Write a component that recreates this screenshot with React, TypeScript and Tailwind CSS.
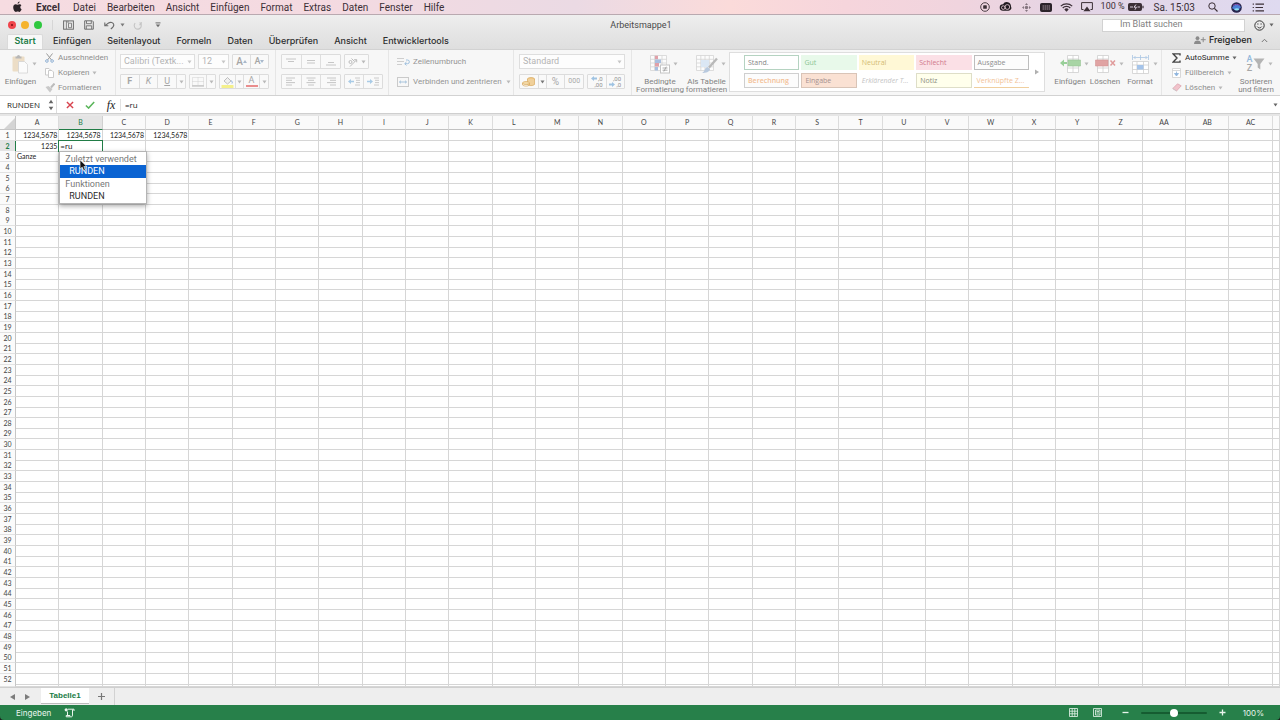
import type { CSSProperties, ReactNode } from "react";

type IconProps = { w: number; h: number; children: ReactNode; className?: string };

function Icon({ w, h, children, className = "" }: IconProps) {
  return (
    <svg
      width={w}
      height={h}
      viewBox={`0 0 ${w} ${h}`}
      fill="none"
      stroke="currentColor"
      aria-hidden="true"
      className={`shrink-0 ${className}`}
    >
      {children}
    </svg>
  );
}

function Caret({ className = "text-[#b9b9b9]" }: { className?: string }) {
  return (
    <Icon w={5} h={4} className={className}>
      <path d="M0.5 0.5h4L2.5 3.5z" fill="currentColor" stroke="none" />
    </Icon>
  );
}

/* ---------- system menu bar ---------- */

const MENUS = ["Datei", "Bearbeiten", "Ansicht", "Einfügen", "Format", "Extras", "Daten", "Fenster", "Hilfe"];

function MenuBar() {
  return (
    <header className="flex h-[15px] shrink-0 items-center justify-between border-b border-[#b9a9b0] bg-[linear-gradient(90deg,#f6dce1_0%,#f4dae1_25%,#ebdae4_45%,#fbdbda_57%,#f6d5dc_66%,#f0d4de_75%,#e3d5e6_85%,#dfdaf0_100%)] pr-[15px] pl-3 text-[10px] text-[#3b2f36]">
      <nav className="flex items-center gap-[11px]" aria-label="Menüleiste">
        <button aria-label="Apple" className="mr-[2px]">
          <Icon w={11} h={12} className="text-[#2a2227]">
            <path
              d="M7.6 0.5c.1 1-.9 2.2-2 2.2C5.500 1.600 6.500 .6 7.600 .5zM9.600 8.200c-.5 1.300-1.300 2.700-2.300 2.700-.7 0-.9-.4-1.700-.4s-1.100.4-1.700.4C2.500 10.900 1.200 8.700 1.200 6.500c0-2 1.200-3.200 2.500-3.200.8 0 1.400.5 1.900.5s1.200-.6 2.200-.5c.6 0 1.200.3 1.600.9-1.600 1-1.400 3.300.2 4z"
              fill="currentColor"
              stroke="none"
            />
          </Icon>
        </button>
        <button className="mr-[2px] font-bold">Excel</button>
        {MENUS.map((m) => (
          <button key={m}>{m}</button>
        ))}
      </nav>
      <div className="flex items-center">
        <Icon w={10} h={10}>
          <circle cx="5" cy="5" r="4.300" strokeWidth=".9" />
          <rect x="3.200" y="3.200" width="3.600" height="3.600" rx=".6" fill="currentColor" stroke="none" />
        </Icon>
        <Icon w={13} h={10} className="ml-[9px] text-[#221b20]">
          <path d="M4 8.800a3.300 3.300 0 010-6.600A4.300 4.300 0 0112 4.500 2.900 2.900 0 019.500 8.800z" fill="currentColor" stroke="none" />
          <circle cx="4.300" cy="5.600" r="1.800" stroke="#f0d4de" strokeWidth=".8" />
          <circle cx="8.300" cy="5" r="2.400" stroke="#f0d4de" strokeWidth=".8" />
        </Icon>
        <Icon w={9} h={9} className="ml-[10px] text-[#85757f]">
          <path d="M4.500 0L6 2H3zM4.500 9L3 7h3zM0 4.500L2 3v3zM9 4.500L7 6V3z" fill="currentColor" stroke="none" />
          <circle cx="4.500" cy="4.500" r="1.700" fill="currentColor" stroke="none" />
        </Icon>
        <Icon w={12} h={9} className="ml-[9px] text-[#2b232a]">
          <rect x=".5" y=".5" width="11" height="8" rx="1" fill="currentColor" />
          <path d="M3.200 2v5M5.200 2v5M7.200 2v5M9.200 2v5" stroke="#b9a9b4" strokeWidth=".6" />
        </Icon>
        <Icon w={13} h={9} className="ml-[8px]">
          <path d="M.8 3.100a8.200 8.200 0 0111.400 0M2.700 5a5.400 5.400 0 017.600 0" strokeWidth="1.200" />
          <path d="M4.300 6.400a3.200 3.200 0 014.400 0L6.500 8.700z" fill="currentColor" stroke="none" />
        </Icon>
        <Icon w={12} h={10} className="ml-[8px]">
          <path d="M2.500 7.500H.6V.6h10.800v6.900H9.500" />
          <path d="M6 4.500l3.600 4.700H2.400z" fill="currentColor" stroke="none" />
        </Icon>
        <span className="ml-[8px] text-[9px] whitespace-nowrap">100 %</span>
        <Icon w={16} h={8} className="ml-[3px]">
          <rect x=".5" y=".5" width="13" height="7" rx="1" fill="currentColor" />
          <path d="M15 2.700v2.600" strokeWidth="1.200" />
          <path d="M2 4h3M8 1.500L6 4.200h2.400L7 6.700M9.500 4h2.500" stroke="#e8dcec" strokeWidth=".9" />
        </Icon>
        <time className="ml-[10px] whitespace-nowrap">Sa. 15:03</time>
        <Icon w={10} h={10} className="ml-[13px]">
          <circle cx="4" cy="4" r="3.200" />
          <path d="M6.400 6.400L9.500 9.500" strokeWidth="1.200" />
        </Icon>
        <Icon w={11} h={11} className="ml-[13px]">
          <circle cx="5.500" cy="5.500" r="5.300" fill="#26244d" stroke="none" />
          <path d="M1 6c2-4 6-4 9-1-2 3-6 4-9 1z" fill="#4b7fd6" stroke="none" />
          <path d="M3 7c2-1 4-1 5.500 0C7 9 4.500 9 3 7z" fill="#8fe0f2" stroke="none" />
          <path d="M2 3.500c2-1.500 5-1.500 7 0" stroke="#a05ac8" strokeWidth=".8" />
        </Icon>
        <Icon w={13} h={9} className="ml-[10px]">
          <path d="M3.500 1.200h8.500M3.500 4.500h7.500M3.500 7.800h8.500M.7 1.200h1.200M.7 4.500h1.200M.7 7.800h1.200" strokeWidth="1.200" />
        </Icon>
      </div>
    </header>
  );
}

/* ---------- window title bar ---------- */

function TitleBar() {
  return (
    <div className="grid h-[19px] shrink-0 grid-cols-[1fr_auto_1fr] items-center pt-px pr-[6px] pl-2 text-[9px] text-[#4a4a4a]">
      <div className="flex items-center">
        <div className="flex gap-[5px]">
          <button aria-label="Schließen" className="flex size-2 items-center justify-center rounded-full bg-[#f0454c]">
            <span className="size-[2px] rounded-full bg-[#7d0d10]" />
          </button>
          <button aria-label="Minimieren" className="size-2 rounded-full bg-[#f5b32e]" />
          <button aria-label="Vollbild" className="size-2 rounded-full bg-[#2fc83f]" />
        </div>
        <span className="ml-[10px] h-[10px] w-px bg-[#d6d6d6]" />
        <button aria-label="Seitenleiste" className="ml-[10px]">
          <Icon w={11} h={10} className="text-[#6d6d6d]">
            <rect x=".6" y=".9" width="9.800" height="8.300" />
            <path d="M3.400 1v8M5 3V1M5.500 3.200h3v4.500h-3z" strokeWidth=".8" />
          </Icon>
        </button>
        <button aria-label="Sichern" className="ml-[10px]">
          <Icon w={10} h={10} className="text-[#6d6d6d]">
            <path d="M.7.8h7.600l1 1v7.400H.7z" />
            <path d="M2.500 1v2.700h4.800V1M2.300 9V5.800h5.400V9" strokeWidth=".9" />
          </Icon>
        </button>
        <button aria-label="Widerrufen" className="ml-[10px] flex items-center gap-[5px]">
          <Icon w={11} h={9} className="text-[#6d6d6d]">
            <path d="M.8 1.500v3.300h3.500M1 4.600L4.500 2c2-1.300 5-.6 5.300 1.700.2 1.500-1 2.800-3 4.300" strokeWidth="1.100" />
          </Icon>
          <Caret className="text-[#7a7a7a]" />
        </button>
        <button aria-label="Wiederholen" className="ml-2">
          <Icon w={9} h={9} className="text-[#c4c4c4]">
            <path d="M6.500 1.600A3.500 3.500 0 112.200 2.200M6.200 3.700h2V1" strokeWidth="1.100" />
          </Icon>
        </button>
        <button aria-label="Symbolleiste anpassen" className="ml-[13px]">
          <Icon w={6} h={6} className="text-[#6d6d6d]">
            <path d="M.5.9h5" />
            <path d="M.8 2.500h4.400L3 5.200z" fill="currentColor" stroke="none" />
          </Icon>
        </button>
      </div>
      <h1 className="pt-px whitespace-nowrap">Arbeitsmappe1</h1>
      <div className="flex items-center justify-end">
        <input
          type="search"
          aria-label="Im Blatt suchen"
          placeholder="Im Blatt suchen"
          className="h-[13px] w-[143px] border border-[#d2d2d2] bg-white pl-[17px] text-[9px] outline-none placeholder:text-[#808080]"
        />
        <button aria-label="Feedback" className="ml-[9px] flex items-center gap-[4px]">
          <Icon w={11} h={11} className="text-[#333]">
            <circle cx="5.500" cy="5.500" r="4.700" />
            <path d="M3.200 6.500c1 1.900 3.600 1.900 4.600 0" strokeWidth=".9" />
            <path d="M3.900 3.400v1.200M7.100 3.400v1.200" />
          </Icon>
          <Caret className="text-[#666]" />
        </button>
      </div>
    </div>
  );
}

const TABS = ["Einfügen", "Seitenlayout", "Formeln", "Daten", "Überprüfen", "Ansicht", "Entwicklertools"];

function TabBar() {
  return (
    <div className="flex h-[15px] shrink-0 items-stretch justify-between pr-3 pl-[7px] font-['Inter','Liberation_Sans',sans-serif] text-[9px] leading-[12px] font-medium text-[#2e2e2e]">
      <div className="flex items-stretch" role="tablist">
        <button
          role="tab"
          aria-selected="true"
          className="w-9 rounded-t-[2px] border border-b-0 border-[#dadada] bg-[#f8f8f8] pb-[2px] font-semibold text-[#217c46]"
        >
          Start
        </button>
        <div className="flex gap-4 pb-px pl-[10px]">
          {TABS.map((t) => (
            <button role="tab" aria-selected="false" key={t}>
              {t}
            </button>
          ))}
        </div>
      </div>
      <div className="flex items-center pb-[3px]">
        <button className="flex items-center gap-[3px] text-[#1e1e1e]">
          <Icon w={12} h={8} className="text-[#8b8b8b]">
            <circle cx="3.500" cy="2.200" r="1.900" fill="currentColor" stroke="none" />
            <path d="M0 8c0-2.500 1.500-3.500 3.500-3.500S7 5.500 7 8z" fill="currentColor" stroke="none" />
            <path d="M9.200 1.200v5M6.800 3.700h4.900" />
          </Icon>
          Freigeben
        </button>
        <button aria-label="Menüband ausblenden" className="ml-[9px]">
          <Icon w={7} h={5} className="text-[#777]">
            <path d="M.8 4l2.700-2.700L6.200 4" />
          </Icon>
        </button>
      </div>
    </div>
  );
}

/* ---------- ribbon ---------- */

const BTN = "flex items-center justify-center border-r border-[#dedede] last:border-r-0";
const BOX = "flex h-[15px] items-stretch rounded-[1px] border border-[#dcdcdc] bg-[#f9f9f9]";

function Group({ children, className }: { children: ReactNode; className: string }) {
  return <section className={`flex shrink-0 border-r border-[#e6e6e6] ${className}`}>{children}</section>;
}

function Seg({ label, children, className = "flex-1" }: { label: string; children: ReactNode; className?: string }) {
  return (
    <button aria-label={label} className={`${BTN} ${className}`}>
      {children}
    </button>
  );
}

function Drop({ label, value, className }: { label: string; value: string; className: string }) {
  return (
    <label className={`relative flex h-[15px] ${className}`}>
      <select
        aria-label={label}
        className="w-full appearance-none border border-[#dedede] bg-[#fdfdfd] pl-[3px] text-[9px] text-[#b4b4b4] outline-none"
      >
        <option>{value}</option>
      </select>
      <Caret className="absolute top-[6px] right-[3px] text-[#c6c6c6]" />
    </label>
  );
}

function SmallButton({ icon, label, caret, dark }: { icon: ReactNode; label: string; caret?: boolean; dark?: boolean }) {
  return (
    <button className={`flex h-[15px] items-center whitespace-nowrap ${dark ? "text-[#2a2a2a]" : "text-[#8e8e8e]"}`}>
      <span className="flex w-[13px] shrink-0 items-center">{icon}</span>
      {label}
      {caret && <Caret className={`ml-[3px] ${dark ? "text-[#666]" : "text-[#b9b9b9]"}`} />}
    </button>
  );
}

function BigButton({ icon, lines, className, caret = true }: { icon: ReactNode; lines: string[]; className: string; caret?: boolean }) {
  return (
    <button className={`flex shrink-0 flex-col items-center pt-1 text-[8px] leading-[8px] text-[#828282] ${className}`}>
      <span className="flex h-[20px] items-center gap-[3px] pl-2">
        {icon}
        {caret && <Caret />}
      </span>
      <span className="mt-1 whitespace-nowrap">
        {lines.map((l) => (
          <span key={l} className="block">
            {l}
          </span>
        ))}
      </span>
    </button>
  );
}

function Lines({ d }: { d: string }) {
  return (
    <Icon w={10} h={9} className="text-[#c0c0c0]">
      <path d={d} strokeWidth=".9" />
    </Icon>
  );
}

const STYLES: { name: string; className: string }[] = [
  { name: "Stand.", className: "border border-[#b5d3c1] bg-white text-[#858585]" },
  { name: "Gut", className: "bg-[#e8f9ea] text-[#8dc596]" },
  { name: "Neutral", className: "bg-[#fff8d6] text-[#d3bb74]" },
  { name: "Schlecht", className: "bg-[#fbe0e6] text-[#d07a8d]" },
  { name: "Ausgabe", className: "border border-[#bdbdbd] bg-[#fcfcfc] text-[#8d8d8d]" },
  { name: "Berechnung", className: "border border-[#cfcfcf] bg-[#fcfcfc] font-semibold text-[#f3bf96]" },
  { name: "Eingabe", className: "border border-[#d9c4b7] bg-[#fae1d3] text-[#a59190]" },
  { name: "Erklärender T...", className: "italic text-[#c4c4c4]" },
  { name: "Notiz", className: "border border-[#dedec8] bg-[#ffffec] text-[#8d8d80]" },
  { name: "Verknüpfte Z...", className: "border-b border-[#f0cf9f] text-[#f2c296]" },
];

function Ribbon() {
  return (
    <div className="flex h-[47px] shrink-0 items-stretch border-t border-b border-[#d2d2d2] bg-[#f7f7f7] text-[8px]">
      <Group className="w-[116px]">
        <BigButton
          className="w-[41px]"
          lines={["Einfügen"]}
          icon={
            <Icon w={17} h={20} className="opacity-60">
              <rect x=".5" y="2.500" width="12" height="15" rx="1" fill="#e6cda6" stroke="none" />
              <path d="M3.500 4.500v-2h1.500a1.500 1.500 0 013 0h1.500v2z" fill="#8d8d8d" stroke="none" />
              <path d="M6.500 7.500h6l3 3v8.500h-9z" fill="#fff" stroke="#bdbdbd" strokeWidth=".8" />
            </Icon>
          }
        />
        <div className="flex flex-col pl-1">
          <SmallButton
            label="Ausschneiden"
            icon={
              <Icon w={9} h={10} className="text-[#9a9a9a]">
                <path d="M1.500.5l5 6.500M7.500.5l-5 6.500" />
                <circle cx="1.900" cy="8" r="1.300" stroke="#8fb0d4" />
                <circle cx="7.100" cy="8" r="1.300" stroke="#8fb0d4" />
              </Icon>
            }
          />
          <SmallButton
            label="Kopieren"
            caret
            icon={
              <Icon w={9} h={10} className="text-[#cbcbcb]">
                <path d="M.5.5h3.500l1.500 1.500v5h-5z" fill="#fff" />
                <path d="M3.500 2.500H7l1.500 1.500v5.500h-5z" fill="#fff" />
              </Icon>
            }
          />
          <SmallButton
            label="Formatieren"
            icon={
              <Icon w={10} h={10}>
                <path d="M9.500.5L6 4.500" stroke="#bcbcbc" strokeWidth="2" />
                <path d="M.5 4l3-1 4 3-2.500 3.500z" fill="#c9c9c9" stroke="none" />
              </Icon>
            }
          />
        </div>
      </Group>

      <Group className="w-[160px] flex-col gap-[5px] pt-1 pr-[6px] pl-1">
        <div className="flex gap-[3px]">
          <Drop label="Schriftart" value="Calibri (Textk..." className="w-[75px]" />
          <Drop label="Schriftgrad" value="12" className="w-[31px]" />
          <div className={`${BOX} flex-1 text-[10px] font-medium text-[#a5a5a5]`}>
            <Seg label="Schriftgrad vergrößern">
              A<Icon w={4} h={3} className="text-[#a9b9cc]"><path d="M0 3h4L2 0z" fill="currentColor" stroke="none" /></Icon>
            </Seg>
            <Seg label="Schriftgrad verkleinern">
              <span className="text-[9px]">A</span>
              <Icon w={4} h={3} className="text-[#a9b9cc]"><path d="M0 0h4L2 3z" fill="currentColor" stroke="none" /></Icon>
            </Seg>
          </div>
        </div>
        <div className="flex gap-[3px] text-[9px] text-[#a5a5a5]">
          <div className={`${BOX} w-[66px]`}>
            <Seg label="Fett"><b>F</b></Seg>
            <Seg label="Kursiv"><i>K</i></Seg>
            <Seg label="Unterstrichen"><u>U</u></Seg>
            <Seg label="Unterstreichungsart" className="w-2"><Caret /></Seg>
          </div>
          <div className={`${BOX} w-[27px]`}>
            <Seg label="Rahmen">
              <Icon w={12} h={10} className="text-[#d0d0d0]">
                <path d="M.5.5h11v8H.5zM6 .5v8M.5 4.500h11" strokeDasharray="1 1" />
                <path d="M0 9h12" stroke="#b5b5b5" />
              </Icon>
            </Seg>
            <Seg label="Rahmenart" className="w-2"><Caret /></Seg>
          </div>
          <div className={`${BOX} flex-1`}>
            <Seg label="Füllfarbe">
              <Icon w={13} h={12}>
                <path d="M3 5l3.500-3.500L10 5 6.500 8z" fill="#f0f0f0" stroke="#b0b0b0" strokeWidth=".8" />
                <path d="M10 4.500c1.500 1 1.500 2 1 3" stroke="#8fb2e0" />
                <path d="M.5 10.500h12" stroke="#f4f08c" strokeWidth="3" />
              </Icon>
            </Seg>
            <Seg label="Füllfarben" className="w-2"><Caret /></Seg>
            <Seg label="Schriftfarbe">
              <span className="flex flex-col items-center leading-[9px]">
                A<span className="h-[2px] w-3 bg-[#e98d8d]" />
              </span>
            </Seg>
            <Seg label="Schriftfarben" className="w-2"><Caret /></Seg>
          </div>
        </div>
      </Group>

      <Group className="w-[113px] flex-col gap-[5px] pt-1 pl-[5px]">
        <div className="flex gap-[3px]">
          <div className={`${BOX} w-[60px]`}>
            <Seg label="Oben ausrichten"><Lines d="M0 2h10M2 4.500h6" /></Seg>
            <Seg label="Zentriert ausrichten"><Lines d="M1 3.500h8M1 6h8" /></Seg>
            <Seg label="Unten ausrichten"><Lines d="M2 5.500h6M0 8h10" /></Seg>
          </div>
          <div className={`${BOX} w-[25px]`}>
            <button aria-label="Ausrichtung" className="flex flex-1 items-center justify-center gap-[3px]">
              <Icon w={10} h={10} className="text-[#b5b5b5]">
                <path d="M2 9.500L8.500 3M6 2.800l2.700-.2v2.700M1 5a1.500 1.500 0 103 0 1.500 1.500 0 10-3 0M3.500 1.500l3 3" strokeWidth=".9" />
              </Icon>
              <Caret />
            </button>
          </div>
        </div>
        <div className="flex gap-[3px]">
          <div className={`${BOX} w-[60px]`}>
            <Seg label="Linksbündig"><Lines d="M0 1h9M0 3.300h6M0 5.600h9M0 8h6" /></Seg>
            <Seg label="Zentriert"><Lines d="M.5 1h9M2 3.300h6M.5 5.600h9M2 8h6" /></Seg>
            <Seg label="Rechtsbündig"><Lines d="M1 1h9M4 3.300h6M1 5.600h9M4 8h6" /></Seg>
          </div>
          <div className={`${BOX} w-[39px]`}>
            <Seg label="Einzug verkleinern">
              <Icon w={12} h={9} className="text-[#c4c4c4]">
                <path d="M7 1h5M8 3.300h4M8 5.600h4M7 8h5" strokeWidth=".9" />
                <path d="M0 4.500l3-2.500v1.700h3v1.600H3V7z" fill="#a9cbe6" stroke="none" />
              </Icon>
            </Seg>
            <Seg label="Einzug vergrößern">
              <Icon w={12} h={9} className="text-[#c4c4c4]">
                <path d="M7 1h5M8 3.300h4M8 5.600h4M7 8h5" strokeWidth=".9" />
                <path d="M6 4.500L3 2v1.700H0v1.600h3V7z" fill="#a9cbe6" stroke="none" />
              </Icon>
            </Seg>
          </div>
        </div>
      </Group>

      <Group className="w-[125px] flex-col gap-[5px] pt-1 pl-2 text-[#949494]">
        <button className="flex h-[15px] items-center gap-[3px] whitespace-nowrap">
          <Icon w={13} h={9} className="text-[#c8c8c8]">
            <path d="M0 1.500h7M0 4.500h7M0 7.500h5" strokeWidth=".9" />
            <path d="M9 3h1.500a1.800 1.800 0 010 3.700H8M9.500 5L7.700 6.700l1.800 1.700" stroke="#9fc0de" />
          </Icon>
          Zeilenumbruch
        </button>
        <button className="flex h-[15px] items-center gap-[4px] whitespace-nowrap">
          <Icon w={12} h={10} className="text-[#cacaca]">
            <rect x=".5" y=".5" width="11" height="9" />
            <path d="M2.500 5h7M4 3.700L2.500 5 4 6.300M8 3.700L9.500 5 8 6.300" stroke="#9fbdd8" strokeWidth=".9" />
          </Icon>
          Verbinden und zentrieren
          <Caret className="text-[#b9b9b9]" />
        </button>
      </Group>

      <Group className="w-[118px] flex-col gap-[5px] pt-1 pr-[6px] pl-[5px]">
        <Drop label="Zahlenformat" value="Standard" className="w-full" />
        <div className="flex gap-[3px] text-[#a8a8a8]">
          <div className={`${BOX} w-[65px]`}>
            <Seg label="Währung">
              <Icon w={13} h={11}>
                <ellipse cx="9" cy="3" rx="3.500" ry="1.500" fill="#f0c987" stroke="#d8ab62" strokeWidth=".7" />
                <path d="M5.500 3v5.500c1.500 1.500 5.500 1.500 7 0V3" fill="#f0d09a" stroke="#d8ab62" strokeWidth=".7" />
                <ellipse cx="4" cy="7" rx="3.500" ry="1.500" fill="#f5dba8" stroke="#d8ab62" strokeWidth=".7" />
                <path d="M.5 7v2c1.500 1.500 5.500 1.500 7 0V7" stroke="#d8ab62" strokeWidth=".7" />
              </Icon>
            </Seg>
            <Seg label="Währungen" className="w-2"><Caret className="text-[#777]" /></Seg>
            <Seg label="Prozent"><span className="text-[10px]">%</span></Seg>
            <Seg label="Tausendertrennzeichen"><span className="text-[7px]">000</span></Seg>
          </div>
          <div className={`${BOX} flex-1 text-[6px] leading-[6px] text-[#8f8f8f]`}>
            <Seg label="Dezimalstelle hinzufügen">
              <span className="flex flex-col items-end">
                <span className="flex items-center gap-px">
                  <Icon w={6} h={5}><path d="M0 2.500L3 0v1.500h3v2H3V5z" fill="#9fc3e2" stroke="none" /></Icon>
                  ,0
                </span>
                <span>,00</span>
              </span>
            </Seg>
            <Seg label="Dezimalstelle löschen">
              <span className="flex flex-col items-end">
                <span>,00</span>
                <span className="flex items-center gap-px">
                  <Icon w={6} h={5}><path d="M6 2.500L3 0v1.500H0v2h3V5z" fill="#9fc3e2" stroke="none" /></Icon>
                  ,0
                </span>
              </span>
            </Seg>
          </div>
        </div>
      </Group>

      <div className="flex shrink-0 pl-1">
        <BigButton
          className="w-[48px]"
          lines={["Bedingte", "Formatierung"]}
          icon={
            <Icon w={20} h={19} className="text-[#d4d4d4]">
              <path d="M.5.5h16v15H.5zM.5 4.300h16M.5 8h16M.5 11.800h16M4.500.5v15M12 .5v15" fill="#fcfcfc" strokeWidth=".8" />
              <path d="M5 .8h3v3.500H5zM5 8h4v3.500H5z" fill="#e0a0a8" stroke="none" />
              <path d="M5 4.500h6V8H5zM5 12h3v3.500H5z" fill="#a8bfe0" stroke="none" />
              <rect x="10.500" y="10" width="9" height="8" fill="#fff" stroke="#c4c4c4" />
              <path d="M12.500 13h5M12.500 15.200h5M16.300 11.700l-2.500 4.800" stroke="#999" strokeWidth=".8" />
            </Icon>
          }
        />
        <BigButton
          className="w-[45px]"
          lines={["Als Tabelle", "formatieren"]}
          icon={
            <Icon w={22} h={19} className="text-[#d4d4d4]">
              <path d="M.5.5h17v15H.5zM.5 4.300h17M.5 8h17M.5 11.800h17M4.800.5v15M9 .5v15M13.300.5v15" fill="#fcfcfc" strokeWidth=".8" />
              <path d="M5 5h8v7H5z" fill="#dbe7f4" stroke="none" />
              <path d="M21 3.500l-8 9" stroke="#b9b9b9" strokeWidth="2.400" />
              <path d="M6 18c3-1 2-5 5.500-6l2.500 2c-.5 3-4 4-8 4z" fill="#b8c9de" stroke="none" />
            </Icon>
          }
        />
      </div>

      <div className="mt-[2px] flex min-w-0 flex-1 self-start border border-[#dedede] bg-white pt-[2px] pb-[3px] pl-[14px]">
        <div className="grid flex-1 grid-cols-5 gap-x-[2px] gap-y-[3px]">
          {STYLES.map((s) => (
            <button
              key={s.name}
              className={`h-[15px] overflow-hidden pl-[3px] text-left font-['Open_Sans','Noto_Sans',sans-serif] text-[7px] leading-[13px] whitespace-nowrap ${s.className}`}
            >
              {s.name}
            </button>
          ))}
        </div>
        <button aria-label="Weitere Formatvorlagen" className="flex w-[15px] items-center justify-center">
          <Icon w={4} h={6} className="text-[#b0b0b0]">
            <path d="M0 .5v5L4 3z" fill="currentColor" stroke="none" />
          </Icon>
        </button>
      </div>

      <Group className="ml-1 w-[113px] pl-[3px]">
        <BigButton
          className="w-9"
          lines={["Einfügen"]}
          icon={
            <Icon w={21} h={18} className="text-[#cfcfcf]">
              <path d="M7.500.5h11v17h-11zM13 .5v17M7.500 4h11M7.500 13h11" fill="#fff" strokeWidth=".8" />
              <path d="M8 5h12.500v6H8z" fill="#a8d5a5" stroke="#98c595" strokeWidth=".6" />
              <path d="M0 8l4-3.500V7h3v2H4v2.500z" fill="#98cf98" stroke="none" />
            </Icon>
          }
        />
        <BigButton
          className="w-[34px]"
          lines={["Löschen"]}
          icon={
            <Icon w={21} h={18} className="text-[#cfcfcf]">
              <path d="M2.500.5h11v17h-11zM8 .5v17M2.500 4h11M2.500 13h11" fill="#fff" strokeWidth=".8" />
              <path d="M.5 5H13v6H.5z" fill="#e0a3a3" stroke="#d39595" strokeWidth=".6" />
              <path d="M15.500 5.500l4.500 5M20 5.500l-4.500 5" stroke="#e09b9b" strokeWidth="1.500" />
            </Icon>
          }
        />
        <BigButton
          className="w-9"
          lines={["Format"]}
          icon={
            <Icon w={19} h={19} className="text-[#cfcfcf]">
              <path d="M1.500 6.500h16v12h-16zM1.500 10h16M1.500 14.500h16M6 6.500v12M12.500 6.500v12" fill="#fff" strokeWidth=".8" />
              <path d="M6 10h6.500v4.500H6z" fill="#a5c4ea" stroke="none" />
              <path d="M1.500 0v5M17.500 0v5M9.500 0v5M2.500 2.500h14M4.500 1L3 2.500 4.500 4M14.500 1L16 2.500 14.500 4" stroke="#a9c5e2" strokeWidth=".8" />
            </Icon>
          }
        />
      </Group>

      <div className="flex shrink-0 pl-[10px]">
        <div className="flex w-[64px] flex-col">
          <SmallButton
            label="AutoSumme"
            dark
            caret
            icon={
              <Icon w={9} h={10} className="text-[#444]">
                <path d="M8 2.500V.9H1.200L5 5 1.200 9.100H8V7.500" strokeWidth="1.400" />
              </Icon>
            }
          />
          <SmallButton
            label="Füllbereich"
            caret
            icon={
              <Icon w={9} h={10} className="text-[#cfcfcf]">
                <path d="M.5.5h8v9h-8zM.5 2.500h8" fill="#fff" strokeWidth=".8" />
                <path d="M4.500 3.500v3M2.500 5.500l2 2.500 2-2.500z" fill="#8db4dd" stroke="#8db4dd" strokeWidth=".8" />
              </Icon>
            }
          />
          <SmallButton
            label="Löschen"
            caret
            icon={
              <Icon w={10} h={9}>
                <path d="M.8 5.500L5.500.8l3.700 2L4.500 8z" fill="#f1c3cb" stroke="#dda6b0" strokeWidth=".8" />
                <path d="M.8 5.500L4.500 8" stroke="#c9c9c9" />
              </Icon>
            }
          />
        </div>
        <BigButton
          className="mr-[5px] ml-px w-[38px]"
          lines={["Sortieren", "und filtern"]}
          icon={
            <span className="flex items-center gap-px">
              <span className="flex flex-col text-[9px] leading-[9px] font-medium">
                <span className="text-[#93b9dc]">A</span>
                <span className="text-[#a6a6a6]">Z</span>
              </span>
              <Icon w={12} h={12} className="text-[#b4b4b4]">
                <path d="M.5.5h11L7.300 6v5.500L4.700 9.500V6z" fill="currentColor" stroke="none" />
              </Icon>
            </span>
          }
        />
      </div>
    </div>
  );
}

/* ---------- formula bar ---------- */

function FormulaBar() {
  return (
    <div className="flex h-[18px] shrink-0 items-center border-b border-[#cfcfcf] bg-white pr-[2px] font-['Open_Sans','Noto_Sans',sans-serif] text-[#222]">
      <div className="flex h-full w-[57px] items-center border-r border-[#dcdcdc] pl-[7px]">
        <input aria-label="Namenfeld" defaultValue="RUNDEN" className="w-[40px] text-[8px] outline-none" />
        <button aria-label="Namen auswählen" className="ml-px">
          <Icon w={6} h={12} className="text-[#666]">
            <path d="M.7 4.200L3 .8l2.300 3.400zM.7 7.800L3 11.200l2.300-3.400z" fill="currentColor" stroke="none" />
          </Icon>
        </button>
      </div>
      <button aria-label="Abbrechen" className="ml-[9px]">
        <Icon w={8} h={8} className="text-[#d8434e]">
          <path d="M.9.9l6.200 6.200M7.100.9L.9 7.100" strokeWidth="1.400" />
        </Icon>
      </button>
      <button aria-label="Eingeben" className="ml-[11px]">
        <Icon w={10} h={8} className="text-[#5bb65b]">
          <path d="M.9 4.500L3.600 7.100 9.200.9" strokeWidth="1.500" />
        </Icon>
      </button>
      <button aria-label="Funktion einfügen" className="ml-[11px] w-[10px] font-['Liberation_Serif',serif] text-[12px] leading-[14px] italic">
        fx
      </button>
      <input
        aria-label="Bearbeitungsleiste"
        defaultValue="=ru"
        className="ml-[4px] h-3 flex-1 border-l border-[#e2e2e2] pl-1 text-[8px] outline-none"
      />
      <button aria-label="Bearbeitungsleiste erweitern">
        <Caret className="text-[#666]" />
      </button>
    </div>
  );
}

/* ---------- sheet ---------- */

const COLS = "grid grid-cols-[16px_repeat(29,minmax(0,6fr))_minmax(0,1fr)]";
const COLUMN_NAMES = [..."ABCDEFGHIJKLMNOPQRSTUVWXYZ", "AA", "AB", "AC", ""];
const ROWS = Array.from({ length: 53 }, (_, i) => i + 1);
const VALUES: Record<string, string> = {
  A1: "1234,5678",
  B1: "1234,5678",
  C1: "1234,5678",
  D1: "1234,5678",
  A2: "1235",
  A3: "Ganze",
  B2: "=ru",
};

function Suggestions() {
  return (
    <div className="absolute top-[10px] left-0 z-10 w-[88px] border border-[#b5b5b5] bg-white pt-px font-['Roboto','Liberation_Sans',sans-serif] text-[9px] leading-[13px] text-[#2b2b2b] shadow-[0_2px_5px_rgba(0,0,0,0.35)]">
      <p className="h-3 pl-[5px] text-[#777]">Zuletzt verwendet</p>
      <button className="block h-[13px] w-full bg-[#0a63d2] pl-[9px] text-left text-white">RUNDEN</button>
      <p className="h-3 pl-[5px] text-[#777]">Funktionen</p>
      <button className="block h-[13px] w-full pl-[9px] text-left">RUNDEN</button>
      <Icon w={9} h={13} className="absolute top-[7px] left-[19px]">
        <path d="M1 .8v9.400l2.200-2 1.500 3.500 1.700-.7-1.500-3.400h3z" fill="#111" stroke="#fff" strokeWidth=".7" />
      </Icon>
    </div>
  );
}

function Sheet() {
  const bodyRows: CSSProperties = { gridTemplateRows: `repeat(${ROWS.length - 1}, minmax(0, 4fr)) minmax(0, 1fr)` };
  return (
    <table className="flex min-h-0 flex-1 flex-col bg-white font-['Lato','Open_Sans',sans-serif] text-[7px] text-[#222]">
      <thead className="block shrink-0 border-t-2 border-[#e6e6e6] bg-[#fafafa]">
        <tr className={`${COLS} h-[14px]`}>
          <td className="flex items-end justify-end border-r border-b border-[#c6c6c6]">
            <Icon w={11} h={11} className="text-[#d4d4d4]">
              <path d="M11 0v11H0z" fill="currentColor" stroke="none" />
            </Icon>
          </td>
          {COLUMN_NAMES.map((c, i) => (
            <th
              key={i}
              scope="col"
              className={`border-r border-b leading-[13px] font-normal ${
                c === "B" ? "border-r-[#d0d0d0] border-b-[#217c46] bg-[#e4e4e4] font-bold text-[#217c46]" : "border-r-[#dcdcdc] border-b-[#c2c2c2] text-[#444]"
              }`}
            >
              {c}
            </th>
          ))}
        </tr>
      </thead>
      <tbody className="grid min-h-0 flex-1" style={bodyRows}>
        {ROWS.map((r) => (
          <tr key={r} className={`${COLS} min-h-0 leading-[10px]`}>
            <th
              scope="row"
              className={`border-r border-b border-b-[#e2e2e2] ${
                r === 2 ? "border-r-[#217c46] bg-[#e4e4e4] font-bold text-[#217c46]" : "border-r-[#c6c6c6] bg-[#fbfbfb] font-normal text-[#444]"
              }`}
            >
              {r <= 52 ? r : ""}
            </th>
            {COLUMN_NAMES.map((c, i) => {
              const id = `${c}${r}`;
              if (id === "B2") {
                return (
                  <td key={i} className="relative -mt-px -ml-px border border-[#217c46] bg-white pl-px text-[8px] leading-[10px]">
                    {VALUES[id]}
                    <Suggestions />
                  </td>
                );
              }
              return (
                <td key={i} className={`border-r border-b border-[#d6d6d6] px-px whitespace-nowrap ${id === "A3" ? "text-left" : "text-right"}`}>
                  {VALUES[id]}
                </td>
              );
            })}
          </tr>
        ))}
      </tbody>
    </table>
  );
}

/* ---------- bottom bars ---------- */

function SheetTabs() {
  return (
    <div className="flex h-[18px] shrink-0 items-start border-t border-[#cfcfcf] bg-[#eeeeee] text-[8px]">
      <div className="flex h-[17px] w-[41px] items-center gap-[10px] pl-[10px] text-[#7c7c7c]">
        <button aria-label="Vorheriges Blatt">
          <Icon w={5} h={6}><path d="M5 0v6L0 3z" fill="currentColor" stroke="none" /></Icon>
        </button>
        <button aria-label="Nächstes Blatt">
          <Icon w={5} h={6}><path d="M0 0v6l5-3z" fill="currentColor" stroke="none" /></Icon>
        </button>
      </div>
      <button className="h-4 w-[48px] border-b border-[#bcbcbc] bg-white font-['Liberation_Sans',sans-serif] font-bold text-[#217c46]">
        Tabelle1
      </button>
      <button aria-label="Neues Blatt" className="flex h-[17px] w-[26px] items-center justify-center border-r border-[#d2d2d2] text-[#777]">
        <Icon w={7} h={7}><path d="M3.500 0v7M0 3.500h7" strokeWidth="1.200" /></Icon>
      </button>
    </div>
  );
}

function StatusBar() {
  return (
    <footer className="flex h-[15px] shrink-0 items-center justify-between rounded-b-[4px] bg-[#27804a] pr-4 pl-4 font-['Inter','Liberation_Sans',sans-serif] text-[8px] text-[#e9f5ed]">
      <div className="flex items-center gap-[13px]">
        <span>Eingeben</span>
        <button aria-label="Makro aufzeichnen">
          <Icon w={11} h={10}>
            <path d="M4 1.200h6v1.800M8.500 1.500v5.500c0 1.500-.5 1.800-1.200 1.800H2.200V7.500h4M3.500 3.500v4" />
            <circle cx="2.200" cy="1.800" r="1.600" fill="currentColor" stroke="none" />
          </Icon>
        </button>
      </div>
      <div className="flex items-center">
        <button aria-label="Normal">
          <Icon w={9} h={9}><path d="M.5.5h8v8h-8zM3.200.5v8M5.800.5v8M.5 3.200h8M.5 5.800h8" strokeWidth=".8" /></Icon>
        </button>
        <button aria-label="Seitenlayout" className="ml-[15px]">
          <Icon w={9} h={9}><path d="M.5.5h8v8h-8zM2.500 2h4.500v5H2.500zM3.500 3.500h2.500M3.500 5h2.500" strokeWidth=".8" /></Icon>
        </button>
        <button aria-label="Verkleinern" className="ml-[20px]">
          <Icon w={7} h={7}><path d="M.5 3.500h6" strokeWidth="1.300" /></Icon>
        </button>
        <input
          type="range"
          aria-label="Zoom"
          min={0}
          max={100}
          defaultValue={50}
          className="mx-[12px] h-[2px] w-[66px] appearance-none rounded-full bg-[#155c31] [&::-webkit-slider-thumb]:size-[8px] [&::-webkit-slider-thumb]:appearance-none [&::-webkit-slider-thumb]:rounded-full [&::-webkit-slider-thumb]:bg-white"
        />
        <button aria-label="Vergrößern">
          <Icon w={7} h={7}><path d="M.5 3.500h6M3.500.5v6" strokeWidth="1.300" /></Icon>
        </button>
        <span className="ml-[17px]">100%</span>
      </div>
    </footer>
  );
}

export default function App() {
  return (
    <div className="flex h-screen flex-col overflow-hidden bg-[#1d1d1d] font-['Roboto','Liberation_Sans',sans-serif]">
      <MenuBar />
      <div className="shrink-0 bg-linear-to-b from-[#eeeeee] to-[#dedede]">
        <TitleBar />
        <TabBar />
      </div>
      <Ribbon />
      <FormulaBar />
      <Sheet />
      <SheetTabs />
      <StatusBar />
    </div>
  );
}
